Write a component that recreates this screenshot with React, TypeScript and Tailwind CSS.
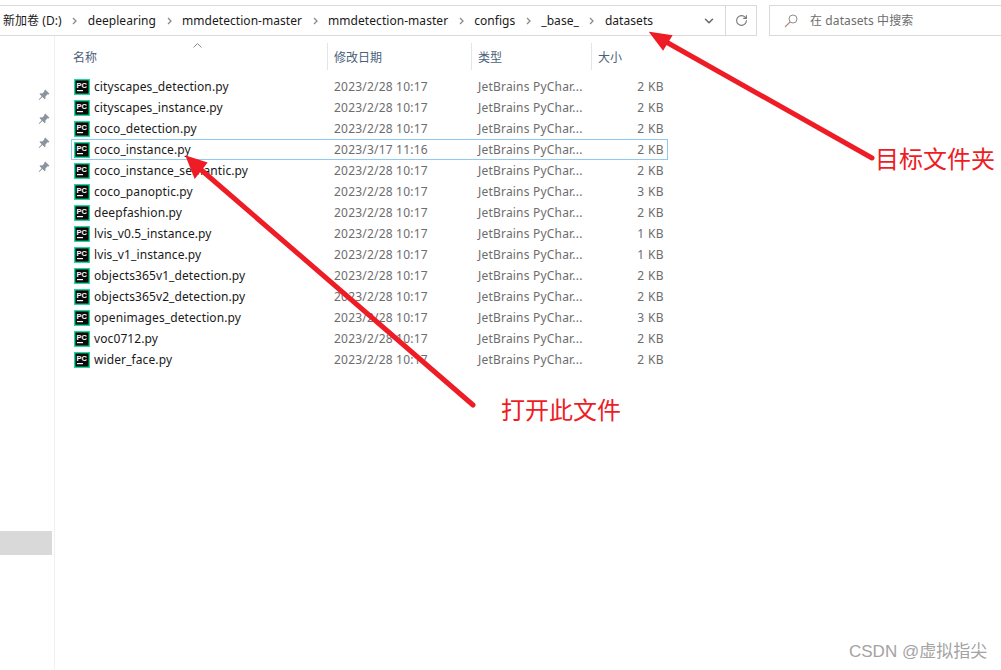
import { ChevronDown, RotateCw } from "lucide-react";

const FILES = [
  { name: "cityscapes_detection.py", date: "2023/2/28 10:17", size: "2 KB" },
  { name: "cityscapes_instance.py", date: "2023/2/28 10:17", size: "2 KB" },
  { name: "coco_detection.py", date: "2023/2/28 10:17", size: "2 KB" },
  { name: "coco_instance.py", date: "2023/3/17 11:16", size: "2 KB", focused: true },
  { name: "coco_instance_semantic.py", date: "2023/2/28 10:17", size: "2 KB" },
  { name: "coco_panoptic.py", date: "2023/2/28 10:17", size: "3 KB" },
  { name: "deepfashion.py", date: "2023/2/28 10:17", size: "2 KB" },
  { name: "lvis_v0.5_instance.py", date: "2023/2/28 10:17", size: "1 KB" },
  { name: "lvis_v1_instance.py", date: "2023/2/28 10:17", size: "1 KB" },
  { name: "objects365v1_detection.py", date: "2023/2/28 10:17", size: "2 KB" },
  { name: "objects365v2_detection.py", date: "2023/2/28 10:17", size: "2 KB" },
  { name: "openimages_detection.py", date: "2023/2/28 10:17", size: "3 KB" },
  { name: "voc0712.py", date: "2023/2/28 10:17", size: "2 KB" },
  { name: "wider_face.py", date: "2023/2/28 10:17", size: "2 KB" },
];

const CRUMBS = ["deeplearing", "mmdetection-master", "mmdetection-master", "configs", "_base_", "datasets"];

function Chevron() {
  return (
    <svg width="5" height="8" viewBox="0 0 5 8" className="shrink-0">
      <path d="M1 1l3 3-3 3" fill="none" stroke="#8a8a8a" strokeWidth="1.3" />
    </svg>
  );
}

function PinIcon() {
  return (
    <svg width="12" height="12" viewBox="0 0 12 12">
      <path d="M7.200.5L11.500 4.800l-1 .7-.9-.2L7.400 7.500l.1 2.100-.8.700-2.300-2.300L1.300 11l-.6-.6 3-3.100L1.500 5.100l.7-.8 2.100.1 2.200-2.200-.1-.9z" fill="#8a939e" />
    </svg>
  );
}

function SearchIcon() {
  return (
    <svg width="14" height="14" viewBox="0 0 14 14" className="shrink-0">
      <circle cx="9" cy="5" r="4" fill="none" stroke="#8f8f8f" strokeWidth="1" />
      <path d="M6 8l-5 5" stroke="#a8917f" strokeWidth="1.100" />
    </svg>
  );
}

function PyCharmIcon() {
  return (
    <svg width="16" height="16" viewBox="0 0 16 16" className="shrink-0">
      <rect x=".7" y=".7" width="14.600" height="14.600" fill="#0b0b0b" stroke="#1fd99a" strokeWidth="1.400" />
      <text x="2.500" y="8.500" fill="#fff" fontSize="7.500" fontWeight="700" fontFamily="'Liberation Sans', sans-serif">PC</text>
      <rect x="3" y="11" width="6" height="1.200" fill="#fff" />
    </svg>
  );
}

function Annotations() {
  return (
    <svg width="1001" height="670" viewBox="0 0 1001 670" className="pointer-events-none absolute top-0 left-0">
      <path d="M872 158L668 43" stroke="#ee1c25" strokeWidth="5" strokeLinecap="round" fill="none" />
      <path d="M651 33L671 36L663 49Z" fill="#ee1c25" stroke="#ee1c25" strokeWidth="2" />
      <path d="M473 405L199 168" stroke="#ee1c25" strokeWidth="5" strokeLinecap="round" fill="none" />
      <path d="M187 157L206 163L195 177Z" fill="#ee1c25" stroke="#ee1c25" strokeWidth="2" />
    </svg>
  );
}

export default function App() {
  return (
    <div className="relative flex h-[670px] w-[1001px] flex-col overflow-hidden bg-white font-['Noto_Sans','Noto_Sans_CJK_SC',sans-serif] text-xs">
      {/* Address bar */}
      <div className="flex h-[36px] shrink-0 items-end pr-0">
        <div className="flex h-[31px] w-[757px] items-center border-y border-r border-[#d9d9d9]">
          <div className="flex flex-1 items-center tracking-[0.05px] text-[#1a1a1a]">
            <span className="ml-[3px]">新加卷 (D:)</span>
            {CRUMBS.map((c, i) => (
              <div key={i} className="flex items-center">
                <div className="mx-[10.5px]"><Chevron /></div>
                <span>{c}</span>
              </div>
            ))}
          </div>
          <div className="flex h-full w-[32px] items-center justify-center">
            <ChevronDown size={14} strokeWidth={2.5} className="text-[#666]" />
          </div>
          <div className="flex h-full w-[31px] items-center justify-center border-l border-[#d9d9d9]">
            <RotateCw size={13} strokeWidth={2} className="text-[#777]" />
          </div>
        </div>
        <div className="ml-[12px] flex h-[31px] flex-1 items-center border-y border-l border-[#d9d9d9] pl-[14px] text-[#6d6d6d]">
          <SearchIcon />
          <span className="ml-[12px] tracking-[0.1px]">在 datasets 中搜索</span>
        </div>
      </div>

      <div className="flex flex-1">
        {/* Nav pane */}
        <aside className="flex w-[55px] shrink-0 flex-col border-r border-[#f0f0f0] pr-[2px]">
          <div className="flex flex-col items-end gap-[12px] pt-[53px] pr-[2px]">
            {[0, 1, 2, 3].map((i) => (
              <PinIcon key={i} />
            ))}
          </div>
          <div className="mt-[358px] h-[24px] w-[52px] bg-[#d9d9d9]" />
        </aside>

        {/* File list */}
        <main className="flex-1 pl-[16px]">
          <div className="mt-[7px] flex h-[27px] text-[#4c607a]">
            <div className="relative flex w-[257px] items-center border-r border-[#e5e5e5] pt-[2px] pl-[2px]">
              名称
              <svg width="9" height="5" viewBox="0 0 9 5" className="absolute top-0 left-[122px]">
                <path d="M.5 4.500l4-4 4 4" fill="none" stroke="#8a8a8a" />
              </svg>
            </div>
            <div className="flex w-[144px] items-center border-r border-[#e5e5e5] pt-[2px] pl-[6px]">修改日期</div>
            <div className="flex w-[120px] items-center border-r border-[#e5e5e5] pt-[2px] pl-[6px]">类型</div>
            <div className="flex items-center pt-[2px] pl-[6px]">大小</div>
          </div>
          <div className="mt-[6px] w-[597px]">
            {FILES.map((f) => (
              <div
                key={f.name}
                className={
                  "flex h-[21px] items-center border pl-[2px] " +
                  (f.focused ? "border-[#90c8f6]" : "border-transparent")
                }
              >
                <PyCharmIcon />
                <span className="ml-[4px] w-[240px] tracking-[0.1px] text-[#1a1a1a]">{f.name}</span>
                <span className="w-[144px] tracking-[0.2px] text-[#6d6d6d]">{f.date}</span>
                <span className="w-[130px] tracking-[0.2px] text-[#6d6d6d]">JetBrains PyChar...</span>
                <span className="flex-1 pr-[3px] text-right tracking-[0.4px] text-[#6d6d6d]">{f.size}</span>
              </div>
            ))}
          </div>
        </main>
      </div>

      <Annotations />
      <span className="absolute top-[142px] left-[875px] text-[24px] leading-[34px] text-[#ee1c25]">目标文件夹</span>
      <span className="absolute top-[393px] left-[501px] text-[24px] leading-[34px] text-[#ee1c25]">打开此文件</span>
      <span className="absolute top-[640px] left-[849px] font-['Liberation_Sans','Noto_Sans_CJK_SC',sans-serif] text-[17px] leading-[24px] text-[#a3a3a3]">CSDN @虚拟指尖</span>
    </div>
  );
}
